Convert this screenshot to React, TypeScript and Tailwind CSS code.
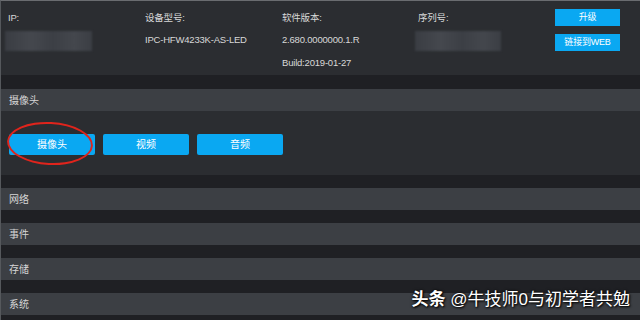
import React from "react";

const font = { fontFamily: '"Liberation Sans", "Noto Sans CJK SC", sans-serif' };

const Blur = ({ className }: { className: string }) => (
  <div className={`bg-[linear-gradient(90deg,#3a3d43,#45484e_30%,#3c3f45_55%,#44474d_80%,#3b3e44)] blur-[1px] ${className}`} />
);

const Section = ({ title }: { title: string }) => (
  <div className="h-[22px] bg-[#3c3f44] flex items-center pl-[8px] text-[10px] text-[#d6d6d6]">{title}</div>
);

const Gap = () => <div className="h-[13px] bg-[#1f2024]" />;

export default function App() {
  return (
    <div className="w-[640px] h-[320px] bg-[#1f2024] overflow-hidden relative border-l border-[#55585c] border-t border-t-[#6a6c70]" style={font}>
      <div className="h-[74px] bg-[#2b2d31] flex text-[9.5px] tracking-[-0.2px] text-[#d8d8d8] pr-[20px]">
        <div className="w-[144px] pl-[7px] pt-[10px]">
          <div>IP:</div>
          <Blur className="mt-[6px] w-[87px] h-[20px] -ml-[3px]" />
        </div>
        <div className="w-[137px] pt-[10px]">
          <div>设备型号:</div>
          <div className="mt-[8px]">IPC-HFW4233K-AS-LED</div>
        </div>
        <div className="w-[136px] pt-[10px]">
          <div>软件版本:</div>
          <div className="mt-[8px]">2.680.0000000.1.R</div>
          <div className="mt-[8px]">Build:2019-01-27</div>
        </div>
        <div className="flex-1 pt-[10px]">
          <div>序列号:</div>
          <Blur className="mt-[6px] w-[86px] h-[20px] -ml-[3px]" />
        </div>
        <div className="w-[65px] pt-[8px] flex flex-col gap-[8px]">
          <div className="h-[17px] bg-[#0aa8f2] text-white flex items-center justify-center text-[9px]">升级</div>
          <div className="h-[17px] bg-[#0aa8f2] text-white flex items-center justify-center text-[9px]">链接到WEB</div>
        </div>
      </div>
      <div className="h-[14px]" />
      <Section title="摄像头" />
      <div className="h-[64px] bg-[#2b2d31] flex items-center gap-[8px] pl-[8px] pt-[3px] relative">
        {["摄像头", "视频", "音频"].map((t) => (
          <div key={t} className="w-[86px] h-[21px] bg-[#0aa8f2] rounded-[2px] text-white text-[10px] flex items-center justify-center">{t}</div>
        ))}
        <div className="absolute left-[6px] top-[11px] w-[86px] h-[43px] rounded-[50%] border-2 border-[#e0241c] rotate-[3deg]" />
      </div>
      <Gap />
      <Section title="网络" />
      <Gap />
      <Section title="事件" />
      <Gap />
      <Section title="存储" />
      <Gap />
      <Section title="系统" />
      <div className="absolute right-[10px] bottom-[8px] text-white text-[17px] font-bold [text-shadow:0_0_3px_#000,1px_1px_2px_#000]">
        头条 <span className="font-normal">@牛技师0与初学者共勉</span>
      </div>
    </div>
  );
}
